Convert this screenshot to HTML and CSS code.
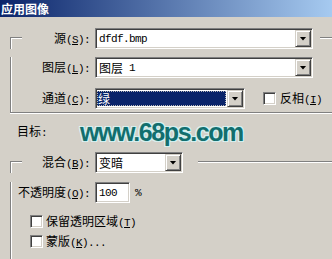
FILE: index.html
```html
<!DOCTYPE html>
<html lang="zh">
<head>
<meta charset="utf-8">
<title>应用图像</title>
<link rel="stylesheet" href="styles.css">
</head>
<body>
<div class="titlebar"><span class="title">应用图像</span></div>

<div class="group g1">
  <div class="legend">
    <span class="corner"></span>
    <label class="lbl">源<span class="key">(<u>S</u>):</span></label>
    <div class="combo w-src"><span class="val mono">dfdf.bmp</span><span class="btn"><i class="tri"></i></span></div>
    <span class="seg seg1"></span>
  </div>
  <div class="body">
    <div class="row r2">
      <label class="lbl">图层<span class="key">(<u>L</u>):</span></label>
      <div class="combo w-src"><span class="val">图层<span class="mono">&nbsp;1</span></span><span class="btn"><i class="tri"></i></span></div>
    </div>
    <div class="row r3">
      <label class="lbl">通道<span class="key">(<u>C</u>):</span></label>
      <div class="combo w-ch"><span class="val sel">绿</span><span class="btn"><i class="tri"></i></span></div>
      <span class="cb cb-inv"></span>
      <span class="cblbl">反相<span class="key">(<u>I</u>)</span></span>
    </div>
  </div>
</div>

<div class="target">
  <span class="tlabel">目标<span class="key">:</span></span>
  <span class="wm">www.68ps.com</span>
</div>

<div class="group g2">
  <div class="legend">
    <span class="corner"></span>
    <label class="lbl">混合<span class="key">(<u>B</u>):</span></label>
    <div class="combo w-blend"><span class="val">变暗</span><span class="btn"><i class="tri"></i></span></div>
    <span class="seg seg2"></span>
  </div>
  <div class="body body2">
    <div class="row r-op">
      <label class="lbl lbl-op">不透明度<span class="key">(<u>O</u>):</span></label>
      <div class="num"><span class="mono">100</span></div>
      <span class="pct key">%</span>
    </div>
    <div class="row crow c1">
      <span class="cb"></span>
      <span class="cblbl">保留透明区域<span class="key">(<u>T</u>)</span></span>
    </div>
    <div class="row crow c2">
      <span class="cb"></span>
      <span class="cblbl">蒙版<span class="key">(<u>K</u>)...</span></span>
    </div>
  </div>
</div>
</body>
</html>
```
FILE: styles.css
```css
* { box-sizing: border-box; }
html, body { margin: 0; padding: 0; }
body {
  width: 332px;
  height: 259px;
  overflow: hidden;
  background: #d4d0c8;
  font-family: "Noto Sans CJK SC", "Liberation Sans", sans-serif;
  font-size: 12px;
  line-height: 14px;
  color: #000;
}
.titlebar {
  height: 17px;
  background: linear-gradient(to right, #0a246a, #a6caf0);
  color: #fff;
  font-weight: bold;
  display: flex;
  align-items: center;
  padding-left: 1px;
}
.key, .mono {
  font-family: "Liberation Mono", "DejaVu Sans Mono", monospace;
  font-size: 11px;
  letter-spacing: -0.6px;
}
.group { margin-left: 10px; }
.g1 { margin-top: 11px; }
.g2 { margin-top: 10px; }
.legend {
  display: flex;
  align-items: center;
  height: 21px;
}
.corner {
  flex: none;
  align-self: stretch;
  width: 12px;
  margin-top: 9px;
  border-top: 1px solid #808080;
  border-left: 1px solid #808080;
  box-shadow: inset 1px 1px 0 #fff;
}
.seg {
  flex: 1;
  align-self: flex-start;
  margin-top: 9px;
  height: 2px;
  border-top: 1px solid #808080;
  border-bottom: 1px solid #fff;
}
.seg1 { margin-left: 7px; }
.seg2 { margin-left: 15px; }
.lbl {
  flex: none;
  width: 68px;
  margin-right: 5px;
  text-align: right;
  white-space: nowrap;
}
.body {
  border-left: 1px solid #808080;
  box-shadow: inset 1px 0 0 #fff;
}
.g1 .body {
  border-bottom: 1px solid #808080;
  box-shadow: inset 1px 0 0 #fff, 0 1px 0 #fff;
  padding-bottom: 3px;
}
.body2 { height: 86px; }
.row {
  display: flex;
  align-items: center;
  height: 21px;
  padding-left: 11px;
}
.r2 { margin-top: 8px; }
.r3 { margin-top: 10px; }
.r-op { margin-top: 9px; padding-left: 6px; }
.lbl-op { width: 73px; }
.crow { height: 13px; padding-left: 19px; }
.c1 { margin-top: 12px; }
.c2 { margin-top: 7px; }

.combo {
  flex: none;
  display: flex;
  height: 21px;
  padding: 1px;
  background: #fff;
  border: 1px solid;
  border-color: #808080 #fff #fff #808080;
  box-shadow: inset 1px 1px 0 #404040, inset -1px -1px 0 #d4d0c8;
}
.w-src { width: 218px; }
.w-ch { width: 150px; }
.w-blend { width: 88px; }
.val {
  flex: 1;
  display: flex;
  align-items: center;
  padding-left: 2px;
  white-space: nowrap;
}
.val.sel {
  margin: 1px 1px 1px 0;
  padding-left: 1px;
  background: #0a246a;
  color: #fff;
  outline: 1px dotted #b8b8b8;
  outline-offset: -1px;
}
.btn {
  flex: none;
  width: 16px;
  height: 17px;
  display: flex;
  align-items: center;
  justify-content: center;
  background: #d4d0c8;
  border: 1px solid;
  border-color: #d4d0c8 #404040 #404040 #d4d0c8;
  box-shadow: inset 1px 1px 0 #fff, inset -1px -1px 0 #808080;
}
.tri {
  display: block;
  width: 7px;
  height: 4px;
  background: #000;
  clip-path: polygon(0 0, 7px 0, 3.5px 4px);
}
.cb {
  flex: none;
  width: 13px;
  height: 13px;
  background: #fff;
  border: 1px solid;
  border-color: #808080 #fff #fff #808080;
  box-shadow: inset 1px 1px 0 #404040, inset -1px -1px 0 #d4d0c8;
}
.cb-inv { margin-left: 18px; }
.cblbl { margin-left: 4px; white-space: nowrap; }
.crow .cblbl { margin-left: 3px; }
.num {
  flex: none;
  width: 35px;
  height: 21px;
  display: flex;
  align-items: center;
  padding-left: 3px;
  background: #fff;
  border: 1px solid;
  border-color: #808080 #fff #fff #808080;
  box-shadow: inset 1px 1px 0 #404040, inset -1px -1px 0 #d4d0c8;
}
.pct { margin-left: 5px; }

.target {
  display: flex;
  align-items: center;
  height: 20px;
  margin-top: 9px;
  padding-left: 17px;
}
.tlabel { flex: none; width: 63px; white-space: nowrap; }
.wm {
  font-family: "Liberation Sans", sans-serif;
  font-weight: bold;
  font-size: 25px;
  line-height: 20px;
  letter-spacing: -1.4px;
  color: #126e6e;
  text-shadow: 1px 0 0 #cdeeee, -1px 0 0 #cdeeee, 0 1px 0 #cdeeee, 0 -1px 0 #cdeeee,
    1px 1px 0 #e4f6f6, -1px -1px 0 #e4f6f6, 1px -1px 0 #e4f6f6, -1px 1px 0 #e4f6f6;
  white-space: nowrap;
}
```
